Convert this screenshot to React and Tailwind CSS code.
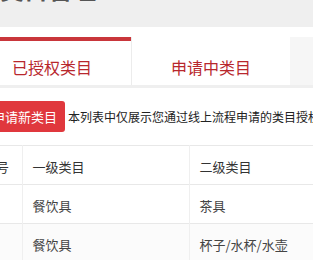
import React from 'react'

const rows = [
    { id: 1, first: '餐饮具', second: '茶具' },
    { id: 2, first: '餐饮具', second: '杯子/水杯/水壶' },
]

function App() {
    return (
        <div className="w-[313px] h-[260px] overflow-hidden bg-white font-['Noto_Sans_CJK_SC','Noto_Sans',sans-serif]">
            <div className="h-[27px] bg-[#efefef] overflow-hidden">
                <h1 className="-mt-[23px] text-[24px] leading-[24px] font-bold text-[#555] whitespace-nowrap">类目管理</h1>
            </div>

            <div className="-ml-[27px] w-[360px]">
                <div className="pt-[10px] bg-white">
                    <div className="flex h-[51px] border-b-[3px] border-[#efefef]">
                        <div className="w-[158px] border-t-[4px] border-[#c9363b] bg-white flex items-center justify-center pt-[7px] text-[16px] text-[#b8272d]">
                            已授权类目
                        </div>
                        <div className="w-[159px] border-l border-[#ececec] bg-white flex items-center justify-center pt-[11px] text-[16px] text-[#b8272d]">
                            申请中类目
                        </div>
                        <div className="flex-1 bg-[#f6f6f6]"></div>
                    </div>
                </div>

                <div className="flex items-center mt-[13px] h-[31px] whitespace-nowrap">
                    <button className="ml-[11px] h-[31px] px-[8px] rounded-[3px] bg-[#e0383d] text-white text-[13px]">
                        申请新类目
                    </button>
                    <span className="ml-[3px] text-[12px] text-[#222]">本列表中仅展示您通过线上流程申请的类目授权记录</span>
                </div>

                <table className="mt-[13px] w-[420px] border-collapse text-[13px] table-fixed">
                    <colgroup>
                        <col className="w-[49px]" />
                        <col className="w-[167px]" />
                        <col />
                    </colgroup>
                    <thead>
                        <tr className="h-[39px] border-t border-b border-[#e8e8e8] text-[#333]">
                            <th className="pl-[10px] pt-[3px] text-left font-normal border-r border-[#efefef]">序号</th>
                            <th className="pl-[10px] pt-[3px] text-left font-normal border-r border-[#efefef]">一级类目</th>
                            <th className="pl-[10px] pt-[3px] text-left font-normal">二级类目</th>
                        </tr>
                    </thead>
                    <tbody>
                        {rows.map((row, i) => (
                            <tr key={row.id} className={`h-[39px] border-b border-[#e8e8e8] text-[#444] ${i % 2 ? 'bg-[#fbfbfb]' : 'bg-white'}`}>
                                <td className="pl-[10px] pt-[3px] border-r border-[#efefef]">{row.id}</td>
                                <td className="pl-[10px] pt-[3px] border-r border-[#efefef]">{row.first}</td>
                                <td className="pl-[10px] pt-[3px]">{row.second}</td>
                            </tr>
                        ))}
                    </tbody>
                </table>
            </div>
        </div>
    )
}

export default App
